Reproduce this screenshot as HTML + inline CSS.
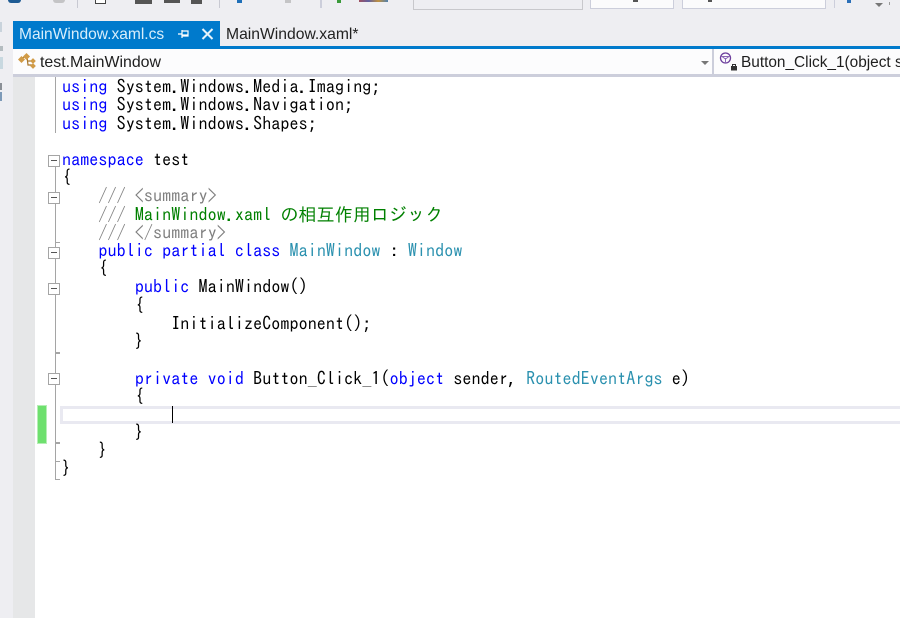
<!DOCTYPE html>
<html lang="ja">
<head>
<meta charset="utf-8">
<style>
html,body{margin:0;padding:0;background:#fff}
body{width:900px;height:618px;position:relative;overflow:hidden;font-family:"Liberation Sans","Noto Sans CJK JP",sans-serif}
.a{position:absolute}
.l{position:absolute;white-space:pre;font-family:"IPAGothic","Liberation Mono",monospace;font-size:18px;line-height:18px;height:18px;letter-spacing:.1px;color:#000;left:62px}
.k{color:#0000ff}.t{color:#2b91af}.c{color:#008000}.g{color:#808080}
.box{position:absolute;left:48px;width:10px;height:10px;border:1px solid #a5a5a5;background:#fff;box-sizing:content-box}
.box:after{content:"";position:absolute;left:2px;right:2px;top:4px;height:1px;background:#555}
.tick{position:absolute;left:55px;width:5px;height:1px;background:#a5a5a5}
.v{position:absolute;left:55px;width:1px;background:#a5a5a5}
.s{filter:blur(.3px)}
</style>
</head>
<body>
<!-- chrome backgrounds -->
<div class="a" style="left:0;top:0;width:900px;height:49px;background:#eeeef2"></div>
<div class="a" style="left:0;top:49px;width:13px;height:569px;background:#eeeef2"></div>
<div class="a" style="left:13px;top:77px;width:22px;height:541px;background:#e6e7e8"></div>

<!-- toolbar remnants -->
<div class="a" style="left:8px;top:0;width:13px;height:3px;background:#1e5b94;border-radius:0 0 7px 7px"></div>
<div class="a" style="left:53px;top:0;width:12px;height:3px;background:#c4c4c6;border-radius:0 0 6px 6px"></div>
<div class="a" style="left:77px;top:0;width:1px;height:8px;background:#c8c9d2"></div>
<div class="a" style="left:95px;top:0;width:9px;height:3px;border:1px solid #444;border-top:0;background:#fff"></div>
<div class="a" style="left:135px;top:0;width:17px;height:4px;background:#555"></div>
<div class="a" style="left:164px;top:0;width:16px;height:3px;background:#555"></div>
<div class="a" style="left:191px;top:0;width:11px;height:4px;background:#555"></div>
<div class="a" style="left:219px;top:0;width:1px;height:8px;background:#c8c9d2"></div>
<div class="a" style="left:237px;top:0;width:5px;height:3px;background:#1e6fb8"></div>
<div class="a" style="left:285px;top:0;width:6px;height:3px;background:#c4c4c6"></div>
<div class="a" style="left:320px;top:0;width:2px;height:8px;background:#cccedb"></div>
<div class="a" style="left:337px;top:0;width:4px;height:3px;background:#3a9a3a"></div>
<div class="a" style="left:359px;top:0;width:29px;height:2px;background:linear-gradient(90deg,#a05060,#6060a0,#c09040,#5080b0)"></div>
<div class="a" style="left:413px;top:-1px;width:168px;height:9px;background:#eeeef2;border:1px solid #c8c8cc;box-sizing:content-box"></div>
<div class="a" style="left:590px;top:-1px;width:82px;height:8px;background:#fbfbfc;border:1px solid #cccedb"></div>
<div class="a" style="left:633px;top:0;width:5px;height:2px;background:#555"></div>
<div class="a" style="left:682px;top:-1px;width:142px;height:8px;background:#fbfbfc;border:1px solid #cccedb"></div>
<div class="a" style="left:708px;top:0;width:4px;height:2px;background:#555"></div>
<div class="a" style="left:834px;top:0;width:1px;height:8px;background:#cccedb"></div>
<div class="a" style="left:847px;top:0;width:4px;height:3px;background:#2a6fb8"></div>
<div class="a" style="left:875px;top:3px;width:0;height:0;border:4px solid transparent;border-top:4px solid #777;border-bottom:0"></div>
<div class="a" style="left:889px;top:2px;width:1px;height:3px;background:#999"></div>
<div class="a" style="left:0;top:22px;width:2px;height:10px;background:#c9d3dc"></div>
<div class="a" style="left:0;top:46px;width:3px;height:5px;background:#b4bcc0"></div>
<div class="a" style="left:0;top:57px;width:3px;height:12px;background:#c8d8e0"></div>
<div class="a" style="left:0;top:83px;width:2px;height:7px;background:#8a8f96"></div>
<div class="a" style="left:0;top:92px;width:2px;height:9px;background:#7d9ab8"></div>

<!-- tabs -->
<div class="a" style="left:13px;top:21px;width:207px;height:25px;background:#007acc"></div>
<div class="a" style="left:13px;top:46px;width:887px;height:3px;background:#007acc"></div>
<div class="a s" style="left:19px;top:25px;font-size:15.55px;line-height:20px;color:#d8eefb;white-space:nowrap">MainWindow.xaml.cs</div>
<svg class="a" style="left:177px;top:28px" width="14" height="12" viewBox="0 0 14 12"><path d="M1 6H5M5 2V10M5 3H11V8H5M5 7H11" fill="none" stroke="#fff" stroke-width="1.2"/></svg>
<svg class="a" style="left:201px;top:28px" width="13" height="12" viewBox="0 0 13 12"><path d="M1.5 1L11.5 11M11.5 1L1.5 11" fill="none" stroke="#e6f3fb" stroke-width="2"/></svg>
<div class="a s" style="left:226px;top:25px;font-size:15.7px;line-height:20px;color:#222;white-space:nowrap">MainWindow.xaml*</div>

<!-- nav bar -->
<div class="a" style="left:13px;top:49px;width:887px;height:25px;background:#fcfcfd"></div>
<div class="a" style="left:13px;top:74px;width:887px;height:3px;background:#cccedb"></div>
<div class="a" style="left:712px;top:49px;width:2px;height:25px;background:#cccedb"></div>
<svg class="a" style="left:18px;top:52px" width="19" height="19" viewBox="0 0 19 19">
<path d="M4 6L9 4M9 5L10 13H15M10 9H14" fill="none" stroke="#a9762b" stroke-width="1.2"/>
<rect x="1" y="5" width="5" height="5" fill="#d19b47" transform="rotate(45 3.5 7.5)"/>
<rect x="6" y="2" width="5" height="5" fill="#d19b47" transform="rotate(45 8.500 4.500)"/>
<rect x="13" y="7" width="4" height="4" fill="#d19b47" transform="rotate(45 15 9)"/>
<rect x="13" y="12" width="4" height="4" fill="#d19b47" transform="rotate(45 15 14)"/>
</svg>
<div class="a s" style="left:40px;top:53px;font-size:15.9px;line-height:19px;color:#1e1e1e;white-space:nowrap">test.MainWindow</div>
<div class="a" style="left:701px;top:61px;width:0;height:0;border:4px solid transparent;border-top:4px solid #777;border-bottom:0"></div>
<svg class="a" style="left:718px;top:51px" width="22" height="20" viewBox="0 0 22 20">
<circle cx="7.5" cy="7" r="5" fill="none" stroke="#6d3f9c" stroke-width="1.3"/>
<path d="M3 5.500H12M7.500 7V12M4 5.500L7.500 8L11 5.500" fill="none" stroke="#8a65b5" stroke-width="1"/>
<rect x="13" y="15" width="6" height="4.500" fill="#333"/>
<path d="M14.500 15V13.500H17.500V15" fill="none" stroke="#333"/>
</svg>
<div class="a s" style="left:741px;top:53px;font-size:15.4px;line-height:19px;color:#1e1e1e;white-space:nowrap;width:159px;overflow:hidden">Button_Click_1(object sender, RoutedEventArgs e)</div>

<!-- gutter/outlining -->
<div class="v" style="top:77px;height:56px"></div>
<div class="box" style="top:155px"></div>
<div class="v" style="top:167px;height:25px"></div>
<div class="box" style="top:192px"></div>
<div class="v" style="top:204px;height:43px"></div>
<div class="tick" style="top:242px"></div>
<div class="box" style="top:247px"></div>
<div class="v" style="top:259px;height:24px"></div>
<div class="box" style="top:283px"></div>
<div class="v" style="top:295px;height:78px"></div>
<div class="tick" style="top:352px;height:2px"></div>
<div class="box" style="top:373px"></div>
<div class="v" style="top:385px;height:95px"></div>
<div class="tick" style="top:442px;height:2px"></div>
<div class="tick" style="top:461px"></div>
<div class="tick" style="top:479px"></div>

<!-- change margin -->
<div class="a" style="left:38px;top:406px;width:8px;height:37px;background:#6ee06e;box-shadow:0 0 0 1px #b5eeb5"></div>

<!-- current line -->
<div class="a" style="left:60px;top:406px;width:840px;height:18px;border:3px solid #e9e9f1;border-right:0;box-sizing:border-box"></div>
<div class="a" style="left:172px;top:406px;width:1px;height:17px;background:#000"></div>

<!-- code -->
<div class="l" style="top:78px"><span class="k">using</span> System.Windows.Media.Imaging;</div>
<div class="l" style="top:96px"><span class="k">using</span> System.Windows.Navigation;</div>
<div class="l" style="top:115px"><span class="k">using</span> System.Windows.Shapes;</div>
<div class="l" style="top:151px"><span class="k">namespace</span> test</div>
<div class="l" style="top:169px">{</div>
<div class="l" style="top:187px">    <span class="g">/// &lt;summary&gt;</span></div>
<div class="l" style="top:206px">    <span class="g">///</span> <span class="c">MainWindow.xaml の相互作用ロジック</span></div>
<div class="l" style="top:224px">    <span class="g">/// &lt;/summary&gt;</span></div>
<div class="l" style="top:242px">    <span class="k">public partial class</span> <span class="t">MainWindow</span> : <span class="t">Window</span></div>
<div class="l" style="top:260px">    {</div>
<div class="l" style="top:278px">        <span class="k">public</span> MainWindow()</div>
<div class="l" style="top:297px">        {</div>
<div class="l" style="top:315px">            InitializeComponent();</div>
<div class="l" style="top:333px">        }</div>
<div class="l" style="top:370px">        <span class="k">private void</span> Button_Click_1(<span class="k">object</span> sender, <span class="t">RoutedEventArgs</span> e)</div>
<div class="l" style="top:388px">        {</div>
<div class="l" style="top:424px">        }</div>
<div class="l" style="top:442px">    }</div>
<div class="l" style="top:460px">}</div>
</body>
</html>
